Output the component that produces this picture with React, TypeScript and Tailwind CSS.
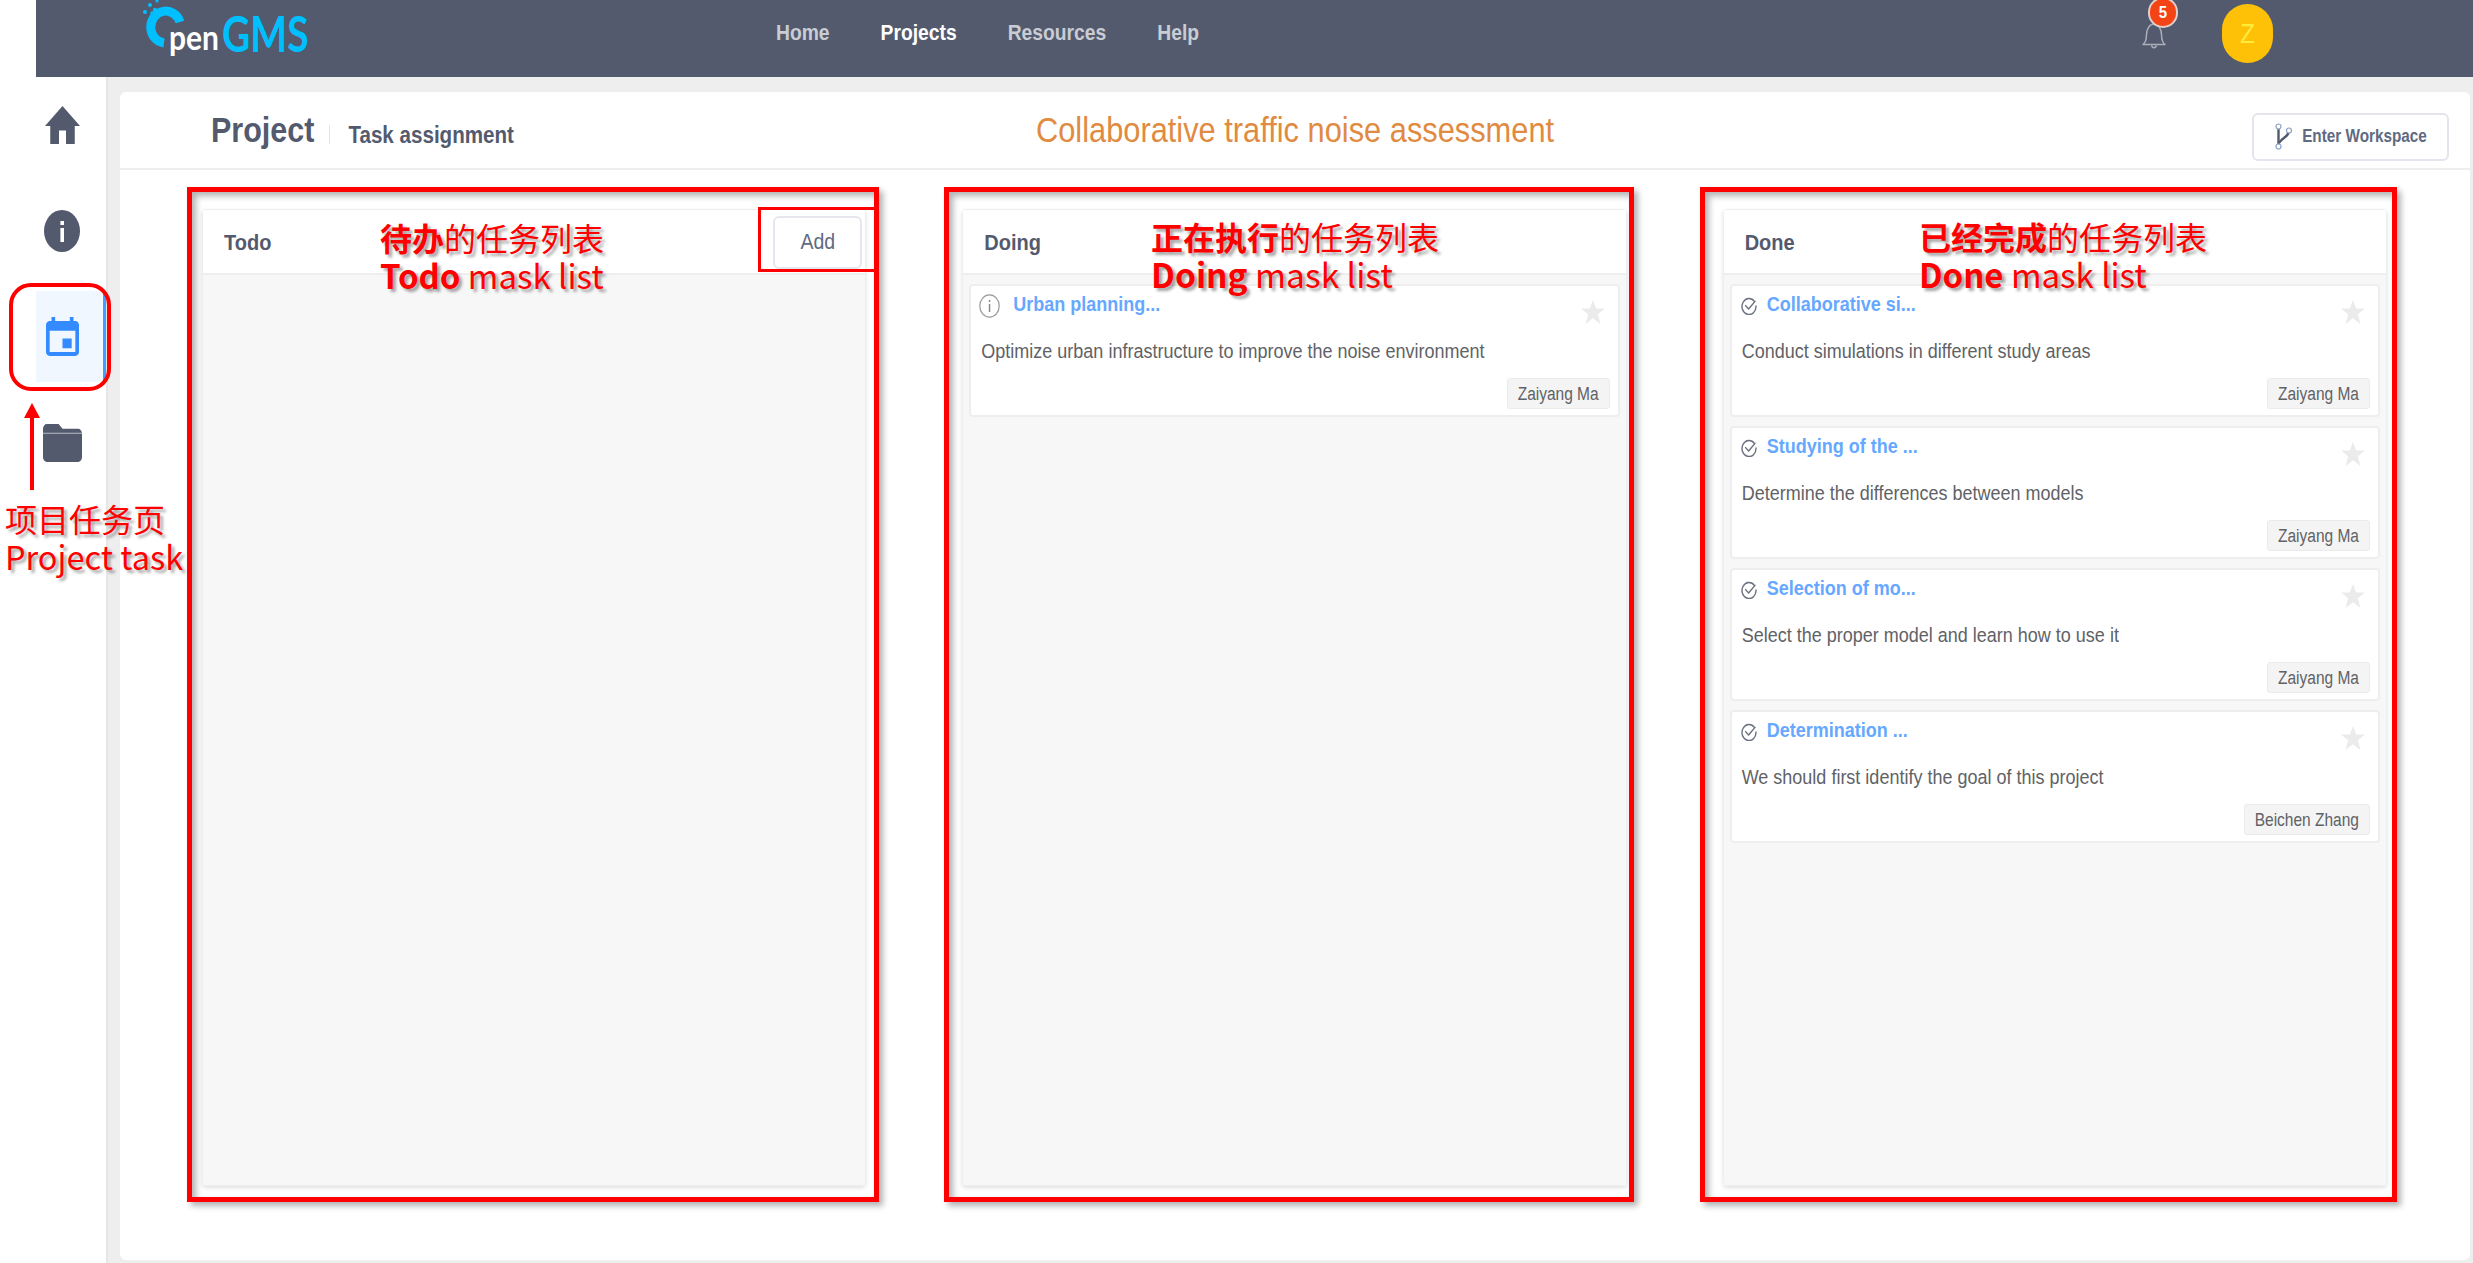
import React from "react";

const S = "inline-block scale-y-[1.14]";

function TaskIcon({ done }: { done: boolean }) {
  if (done) {
    return (
      <svg width="16" height="18" viewBox="0 0 16 18" fill="none" className="mt-[4px] ml-[1px] shrink-0" stroke="#6a7080" strokeWidth="1.4">
        <path d="M13.4 4.4A7 8 0 1 0 15 9" strokeLinecap="round" />
        <path d="M4.6 8.6 7.6 12 14 4.4" strokeLinecap="round" strokeLinejoin="round" />
      </svg>
    );
  }
  return (
    <svg width="21" height="24" viewBox="0 0 21 24" fill="none" className="mt-[1px] shrink-0">
      <ellipse cx="10.5" cy="12" rx="9.7" ry="11.2" stroke="#9a9a9a" strokeWidth="1.2" />
      <rect x="9.8" y="10" width="1.5" height="8" fill="#8a8a8a" />
      <rect x="9.8" y="6" width="1.5" height="2" fill="#8a8a8a" />
    </svg>
  );
}

function Card({ title, desc, who, done }: { title: string; desc: string; who: string; done: boolean }) {
  return (
    <div className="h-[133px] shrink-0 rounded-[4px] border-2 border-[#eeeeee] bg-white">
      <div className="flex h-[48px] items-start pl-[8px] pr-[13px] pt-[7px]">
        <TaskIcon done={done} />
        <span className={`${S} ${done ? "ml-[10px]" : "ml-[13px]"} text-[18px] leading-[22px] font-bold text-[#66a8ff]`}>{title}</span>
        <svg width="24" height="24" viewBox="0 0 24 24" className="ml-auto mt-[7px]" preserveAspectRatio="none">
          <path d="M12 0l3.2 8.6H24l-7.1 5.6L19.4 24 12 18.3 4.6 24l2.5-9.8L0 8.6h8.8z" fill="#ebebeb" />
        </svg>
      </div>
      <div className="flex h-[34px] items-center pl-[10px]">
        <span className={`${S} text-[18px] text-[#606266]`}>{desc}</span>
      </div>
      <div className="mt-[10px] flex justify-end pr-[8px]">
        <span className="flex h-[31px] items-center rounded-[3px] border border-[#ebebed] bg-[#f4f4f5] px-[10px]">
          <span className={`${S} text-[15.5px] text-[#606266]`}>{who}</span>
        </span>
      </div>
    </div>
  );
}

function Panel({ title, add, children }: { title: string; add?: boolean; children?: React.ReactNode }) {
  return (
    <div className="flex h-[977px] flex-col overflow-hidden rounded-[4px] border border-[#eeeeee] shadow-[0_2px_4px_rgba(0,0,0,0.12)]">
      <div className="flex h-[65px] shrink-0 items-center justify-between border-b-2 border-[#eeeeee] bg-white pl-[21px] pr-[3px]">
        <span className={`${S} text-[20px] font-bold text-[#535a6e]`}>{title}</span>
        {add && (
          <button className="mt-[1px] flex h-[53px] w-[89px] items-center justify-center rounded-[6px] border-2 border-[#e6e7ee] bg-white text-[19.5px] text-[#606a80]">
            <span className={S}>Add</span>
          </button>
        )}
      </div>
      <div className="flex flex-1 flex-col gap-[9px] bg-[#f7f7f7] px-[6px] pt-[9px]">{children}</div>
    </div>
  );
}

function SideItem({ active, children }: { active?: boolean; children: React.ReactNode }) {
  return (
    <div className={active ? "flex h-[91px] items-center justify-center border-r-[3px] border-[#409eff] bg-[#f0f7ff] pr-[15px]" : "flex h-[91px] items-center justify-center pr-[18px]"}>
      {children}
    </div>
  );
}

const redText = "absolute flex flex-col text-[32px] leading-[38px] whitespace-nowrap text-[#ff0000] font-['Noto_Sans_CJK_SC',sans-serif] [text-shadow:3px_3px_3px_rgba(0,0,0,0.35)]";
const redBox = "absolute top-[187px] h-[1015px] border-[5px] border-[#ff0000] shadow-[4px_4px_6px_rgba(0,0,0,0.3),inset_4px_4px_6px_rgba(0,0,0,0.3)]";

export default function App() {
  return (
    <div className="relative flex h-[1263px] w-full overflow-hidden bg-white font-['Liberation_Sans',sans-serif]">
      <div className="w-[36px] shrink-0" />
      <div className="flex min-w-0 flex-1 flex-col bg-[#eeeeee]">
        {/* top bar */}
        <header className="flex h-[77px] shrink-0 items-center bg-[#535a6e] pr-[200px]">
          <div className="relative ml-[111px] flex h-[77px] w-[160px] items-baseline pl-[22px] pt-[13px] font-['Lato',sans-serif]">
            <svg width="40" height="50" viewBox="0 0 40 50" fill="none" className="absolute left-0 top-0 overflow-visible">
              <path d="M33 22A15 16 0 1 0 17 43" stroke="#00bfff" strokeWidth="9" />
              <circle cx="-2" cy="12" r="2" fill="#00bfff" />
              <circle cx="3" cy="5" r="2" fill="#00bfff" />
              <circle cx="8" cy="10" r="2.2" fill="#00bfff" />
              <circle cx="10" cy="1" r="1.6" fill="#00bfff" />
              <circle cx="5" cy="13" r="1.8" fill="#00bfff" />
            </svg>
            <span className={`${S} relative text-[30px] leading-[40px] font-bold text-white`}>pen</span>
            <span className="relative ml-[3px] inline-block scale-y-[1.25] text-[39px] leading-[40px] font-bold text-[#00bfff]">GMS</span>
          </div>
          <nav className="ml-[469px] flex gap-[51px] pb-[10px] text-[19.3px] font-bold text-[#c9ccd3]">
            <span className={S}>Home</span>
            <span className={`${S} text-white`}>Projects</span>
            <span className={S}>Resources</span>
            <span className={S}>Help</span>
          </nav>
          <div className="ml-auto flex items-start self-start">
            <div className="relative mr-[44px] h-[77px] w-[36px]">
              <svg width="24" height="27" viewBox="0 0 24 27" fill="none" className="absolute left-0 top-[23px]" stroke="#a9aeb9" strokeWidth="1.5">
                <path d="M1 21.5c2.6-2 3.4-4.3 3.4-9C4.4 6 7.5 1 12 1s7.6 5 7.6 11.5c0 4.7.8 7 3.4 9z" strokeLinejoin="round" />
                <path d="M9.5 22.5a2.6 3 0 0 0 5 0" />
              </svg>
              <div className="absolute left-[6px] top-[-3px] flex h-[31px] w-[30px] items-center justify-center rounded-full border-2 border-[#e0d0cd] bg-[#f44315] text-[15px] font-bold text-white">
                <span className={S}>5</span>
              </div>
            </div>
            <div className="mt-[4px] flex h-[59px] w-[51px] items-center justify-center rounded-full bg-[#ffc107] text-[24px] text-[#ffeb3b]">
              <span className={S}>Z</span>
            </div>
          </div>
        </header>

        <div className="flex min-h-0 flex-1">
          {/* sidebar */}
          <aside className="flex w-[72px] shrink-0 flex-col gap-[15px] border-r-2 border-[#e6e6e6] bg-white pt-[2px]">
            <SideItem>
              <svg width="35" height="38" viewBox="2 3 20 17" preserveAspectRatio="none" fill="#535a6e">
                <path d="M10 20v-6h4v6h5v-8h3L12 3 2 12h3v8z" />
              </svg>
            </SideItem>
            <SideItem>
              <svg width="36" height="42" viewBox="0 0 36 42">
                <ellipse cx="18" cy="21" rx="18" ry="21" fill="#535a6e" />
                <rect x="16.4" y="18" width="3.6" height="14" fill="#ffffff" />
                <rect x="16.4" y="11" width="3.6" height="4" fill="#ffffff" />
              </svg>
            </SideItem>
            <SideItem active>
              <svg width="33" height="39" viewBox="3 1 18 20" preserveAspectRatio="none" fill="#338bff">
                <path d="M17 12h-5v5h5v-5zM16 1v2H8V1H6v2H5c-1.11 0-1.99.9-1.99 2L3 19c0 1.1.89 2 2 2h14c1.1 0 2-.9 2-2V5c0-1.1-.9-2-2-2h-1V1h-2zm3 18H5V8h14v11z" />
              </svg>
            </SideItem>
            <SideItem>
              <svg width="39" height="38" viewBox="2 4 20 16" preserveAspectRatio="none" fill="#535a6e">
                <path d="M10 4H4c-1.1 0-2 .9-2 2v12c0 1.1.9 2 2 2h16c1.1 0 2-.9 2-2V8c0-1.1-.9-2-2-2h-8l-2-2z" />
                <path d="M2 7.9h20" stroke="#d9dbe0" strokeWidth="0.35" />
              </svg>
            </SideItem>
          </aside>

          {/* main card */}
          <main className="mb-[3px] ml-[12px] mr-[3px] mt-[15px] flex min-w-0 flex-1 flex-col rounded-[6px] bg-white">
            <div className="flex h-[78px] shrink-0 items-center border-b-2 border-[#eeeeee] pl-[91px] pr-[21px]">
              <span className={`${S} mt-[2px] text-[30.5px] font-bold text-[#535a6e]`}>Project</span>
              <span className="ml-[15px] mt-[8px] h-[19px] w-px bg-[#e4e4e4]" />
              <span className={`${S} ml-[18px] mt-[10px] text-[20.6px] font-bold text-[#535a6e]`}>Task assignment</span>
              <span className={`${S} ml-[522px] mt-[3px] text-[30.8px] text-[#e08b3f]`}>Collaborative traffic noise assessment</span>
              <button className="ml-auto mt-[13px] flex h-[48px] w-[197px] items-center justify-center rounded-[6px] border-2 border-[#e4e5ec] bg-white text-[15.3px] font-bold text-[#606a80]">
                <svg width="20" height="27" viewBox="0 0 20 27" fill="none" className="mr-[8px]">
                  <path d="M4.5 4v19" stroke="#535a6e" strokeWidth="2.4" />
                  <path d="M14.5 9c0 5-6 5-9.5 11" stroke="#535a6e" strokeWidth="2.4" />
                  <circle cx="4.5" cy="3.5" r="2.5" fill="#ffffff" stroke="#8aa4c4" strokeWidth="1.2" />
                  <circle cx="15" cy="7.5" r="2.5" fill="#ffffff" stroke="#8aa4c4" strokeWidth="1.2" />
                  <circle cx="4.5" cy="23.5" r="2.5" fill="#ffffff" stroke="#8aa4c4" strokeWidth="1.2" />
                </svg>
                <span className={S}>Enter Workspace</span>
              </button>
            </div>
            <div className="grid grid-cols-3 gap-[96px] pl-[82px] pr-[83px] pt-[39px]">
              <Panel title="Todo" add />
              <Panel title="Doing">
                <Card done={false} title="Urban planning..." desc="Optimize urban infrastructure to improve the noise environment" who="Zaiyang Ma" />
              </Panel>
              <Panel title="Done">
                <Card done title="Collaborative si..." desc="Conduct simulations in different study areas" who="Zaiyang Ma" />
                <Card done title="Studying of the ..." desc="Determine the differences between models" who="Zaiyang Ma" />
                <Card done title="Selection of mo..." desc="Select the proper model and learn how to use it" who="Zaiyang Ma" />
                <Card done title="Determination ..." desc="We should first identify the goal of this project" who="Beichen Zhang" />
              </Panel>
            </div>
          </main>
        </div>
      </div>

      {/* annotations laid over the screenshot */}
      <div className={`${redBox} left-[187px] w-[692px]`} />
      <div className={`${redBox} left-[944px] w-[690px]`} />
      <div className={`${redBox} left-[1700px] w-[697px]`} />
      <div className="absolute left-[758px] top-[207px] h-[65px] w-[119px] border-[3px] border-[#ff0000]" />
      <div className="absolute left-[9px] top-[283px] h-[108px] w-[102px] rounded-[22px] border-[4px] border-[#ff0000]" />
      <svg width="16" height="87" viewBox="0 0 16 87" className="absolute left-[24px] top-[403px]">
        <path d="M8 0 16 15H0z" fill="#ff0000" />
        <rect x="6" y="14" width="4" height="73" fill="#ff0000" />
      </svg>
      <div className={`${redText} left-[5px] top-[499px]`}>
        <span>项目任务页</span>
        <span className="text-[32.5px]">Project task</span>
      </div>
      <div className={`${redText} left-[380px] top-[218px]`}>
        <span><b>待办</b>的任务列表</span>
        <span className="text-[33px]"><b>Todo</b> mask list</span>
      </div>
      <div className={`${redText} left-[1151px] top-[217px]`}>
        <span><b>正在执行</b>的任务列表</span>
        <span className="text-[33.5px]"><b>Doing</b> mask list</span>
      </div>
      <div className={`${redText} left-[1919px] top-[217px]`}>
        <span><b>已经完成</b>的任务列表</span>
        <span className="text-[33px]"><b>Done</b> mask list</span>
      </div>
    </div>
  );
}
